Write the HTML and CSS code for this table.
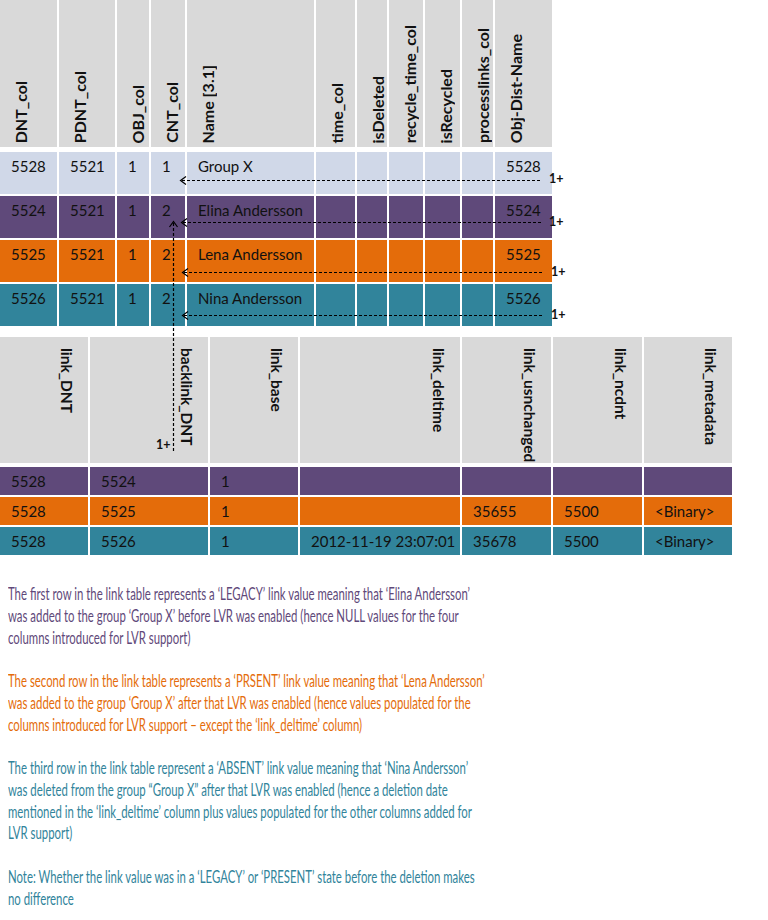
FILE: index.html
```html
<!DOCTYPE html>
<html>
<head>
<meta charset="utf-8">
<link rel="stylesheet" href="styles.css">
</head>
<body>
<div class="diagram">
  <div class="tbl top">
    <div class="trow head">
      <div class="hc"><span class="vt">DNT_col</span></div>
      <div class="hc"><span class="vt">PDNT_col</span></div>
      <div class="hc"><span class="vt">OBJ_col</span></div>
      <div class="hc"><span class="vt">CNT_col</span></div>
      <div class="hc"><span class="vt">Name [3.1]</span></div>
      <div class="hc"><span class="vt">time_col</span></div>
      <div class="hc"><span class="vt">isDeleted</span></div>
      <div class="hc"><span class="vt">recycle_time_col</span></div>
      <div class="hc"><span class="vt">isRecycled</span></div>
      <div class="hc"><span class="vt">processlinks_col</span></div>
      <div class="hc"><span class="vt">Obj-Dist-Name</span></div>
    </div>
    <div class="trow data light">
      <div class="c">5528</div><div class="c">5521</div><div class="c">1</div><div class="c">1</div><div class="c">Group X</div>
      <div class="c"></div><div class="c"></div><div class="c"></div><div class="c"></div><div class="c"></div><div class="c">5528</div>
    </div>
    <div class="trow data purple">
      <div class="c">5524</div><div class="c">5521</div><div class="c">1</div><div class="c">2</div><div class="c">Elina Andersson</div>
      <div class="c"></div><div class="c"></div><div class="c"></div><div class="c"></div><div class="c"></div><div class="c">5524</div>
    </div>
    <div class="trow data orange">
      <div class="c">5525</div><div class="c">5521</div><div class="c">1</div><div class="c">2</div><div class="c">Lena Andersson</div>
      <div class="c"></div><div class="c"></div><div class="c"></div><div class="c"></div><div class="c"></div><div class="c">5525</div>
    </div>
    <div class="trow data teal">
      <div class="c">5526</div><div class="c">5521</div><div class="c">1</div><div class="c">2</div><div class="c">Nina Andersson</div>
      <div class="c"></div><div class="c"></div><div class="c"></div><div class="c"></div><div class="c"></div><div class="c">5526</div>
    </div>
  </div>

  <div class="tbl bottom">
    <div class="brow head">
      <div class="hc"><span class="vd">link_DNT</span></div>
      <div class="hc"><span class="vd">backlink_DNT</span></div>
      <div class="hc"><span class="vd">link_base</span></div>
      <div class="hc"><span class="vd">link_deltime</span></div>
      <div class="hc"><span class="vd">link_usnchanged</span></div>
      <div class="hc"><span class="vd">link_ncdnt</span></div>
      <div class="hc"><span class="vd">link_metadata</span></div>
    </div>
    <div class="brow data purple">
      <div class="c">5528</div><div class="c">5524</div><div class="c">1</div><div class="c"></div><div class="c"></div><div class="c"></div><div class="c"></div>
    </div>
    <div class="brow data orange">
      <div class="c">5528</div><div class="c">5525</div><div class="c">1</div><div class="c"></div><div class="c">35655</div><div class="c">5500</div><div class="c">&lt;Binary&gt;</div>
    </div>
    <div class="brow data teal">
      <div class="c">5528</div><div class="c">5526</div><div class="c">1</div><div class="c">2012-11-19 23:07:01</div><div class="c">35678</div><div class="c">5500</div><div class="c">&lt;Binary&gt;</div>
    </div>
  </div>

  <svg class="arrows" width="768" height="560" viewBox="0 0 768 560">
    <g fill="none" stroke="#000" stroke-width="1.2">
      <path d="M182 180.5 H541" stroke-dasharray="3 2"/>
      <path d="M186 176.5 L180.5 180.5 L186 184.5"/>
      <path d="M183 222.5 H541" stroke-dasharray="3 2"/>
      <path d="M187 218.5 L181.5 222.5 L187 226.5"/>
      <path d="M184 272.5 H543" stroke-dasharray="3 2"/>
      <path d="M188 268.5 L182.5 272.5 L188 276.5"/>
      <path d="M184 315.5 H543" stroke-dasharray="3 2"/>
      <path d="M188 311.5 L182.5 315.5 L188 319.5"/>
      <path d="M173.5 223 V452" stroke-dasharray="3 2"/>
      <path d="M169.5 227 L173.5 221.5 L177.5 227"/>
    </g>
    <g class="mult">
      <text x="549" y="183">1+</text>
      <text x="549" y="226">1+</text>
      <text x="551" y="276">1+</text>
      <text x="551" y="319">1+</text>
      <text x="156" y="449">1+</text>
    </g>
  </svg>
</div>

<div class="notes-wrap">
  <div class="notes">
    <p class="note n-purple">The first row in the link table represents a ‘LEGACY’ link value meaning that ‘Elina Andersson’<br>was added to the group ‘Group X’ before LVR was enabled (hence NULL values for the four<br>columns introduced for LVR support)</p>
    <p class="note n-orange">The second row in the link table represents a ‘PRSENT’ link value meaning that ‘Lena Andersson’<br>was added to the group ‘Group X’ after that LVR was enabled (hence values populated for the<br>columns introduced for LVR support – except the ‘link_deltime’ column)</p>
    <p class="note n-teal">The third row in the link table represent a ‘ABSENT’ link value meaning that ‘Nina Andersson’<br>was deleted from the group “Group X” after that LVR was enabled (hence a deletion date<br>mentioned in the ‘link_deltime’ column plus values populated for the other columns added for<br>LVR support)</p>
    <p class="note n-teal">Note: Whether the link value was in a ‘LEGACY’ or ‘PRESENT’ state before the deletion makes<br>no difference</p>
  </div>
</div>
</body>
</html>
```

FILE: styles.css
```css
html, body {
  margin: 0;
  padding: 0;
  background: #fff;
}
body {
  width: 768px;
  font-family: Lato, "Open Sans", "Liberation Sans", sans-serif;
  color: #111;
  overflow: hidden;
}

.diagram {
  position: relative;
  width: 768px;
  height: 557px;
}

/* top table */
.trow {
  display: grid;
  grid-template-columns: 57px 56px 32px 34px 127px 39px 30px 34px 35px 31px 57px;
  column-gap: 2px;
  width: 552px;
}
.top .head {
  height: 147px;
  margin-bottom: 5px;
}
.top .data {
  height: 42px;
  margin-bottom: 2px;
}

/* bottom table */
.bottom {
  margin-top: 11px;
}
.brow {
  display: grid;
  grid-template-columns: 88px 118px 88px 160px 89px 89px 88px;
  column-gap: 2px;
  width: 732px;
}
.bottom .head {
  height: 126px;
  margin-bottom: 4px;
}
.bottom .data {
  height: 28px;
  margin-bottom: 2px;
}

.hc {
  background: #d9d9d9;
  display: flex;
  overflow: hidden;
}
.top .hc {
  align-items: flex-end;
  justify-content: flex-start;
  padding: 0 0 4px 12px;
}
.bottom .hc {
  align-items: flex-start;
  justify-content: flex-end;
  padding: 11px 12px 0 0;
}
.vt, .vd {
  writing-mode: vertical-rl;
  font-weight: 700;
  font-size: 16px;
  line-height: 18px;
  white-space: nowrap;
  color: #111;
}
.vd {
  font-size: 15.5px;
}
.vt {
  transform: rotate(180deg);
}

.c {
  font-size: 15px;
  white-space: nowrap;
}
.top .c {
  padding: 4px 0 0 11px;
  line-height: 20px;
}
.bottom .c {
  padding-left: 11px;
  display: flex;
  align-items: center;
}

.light .c { background: #d0d8e8; }
.purple .c { background: #5f497a; }
.orange .c { background: #e46c0a; }
.teal .c { background: #31849b; }

.arrows {
  position: absolute;
  left: 0;
  top: 0;
  pointer-events: none;
}
.mult text {
  font-family: Lato, "Liberation Sans", sans-serif;
  font-weight: 700;
  font-size: 12.5px;
  fill: #111;
}

/* notes */
.notes-wrap {
  margin-top: 26px;
  padding-left: 8px;
  width: 760px;
  overflow: hidden;
}
.notes {
  width: 720px;
  transform: scaleX(0.669);
  transform-origin: 0 0;
}
.note {
  margin: 0 0 21.75px 0;
  font-size: 17px;
  line-height: 21.75px;
  white-space: nowrap;
}
.n-purple { color: #5f497a; }
.n-orange { color: #e46c0a; }
.n-teal { color: #31849b; }
```
